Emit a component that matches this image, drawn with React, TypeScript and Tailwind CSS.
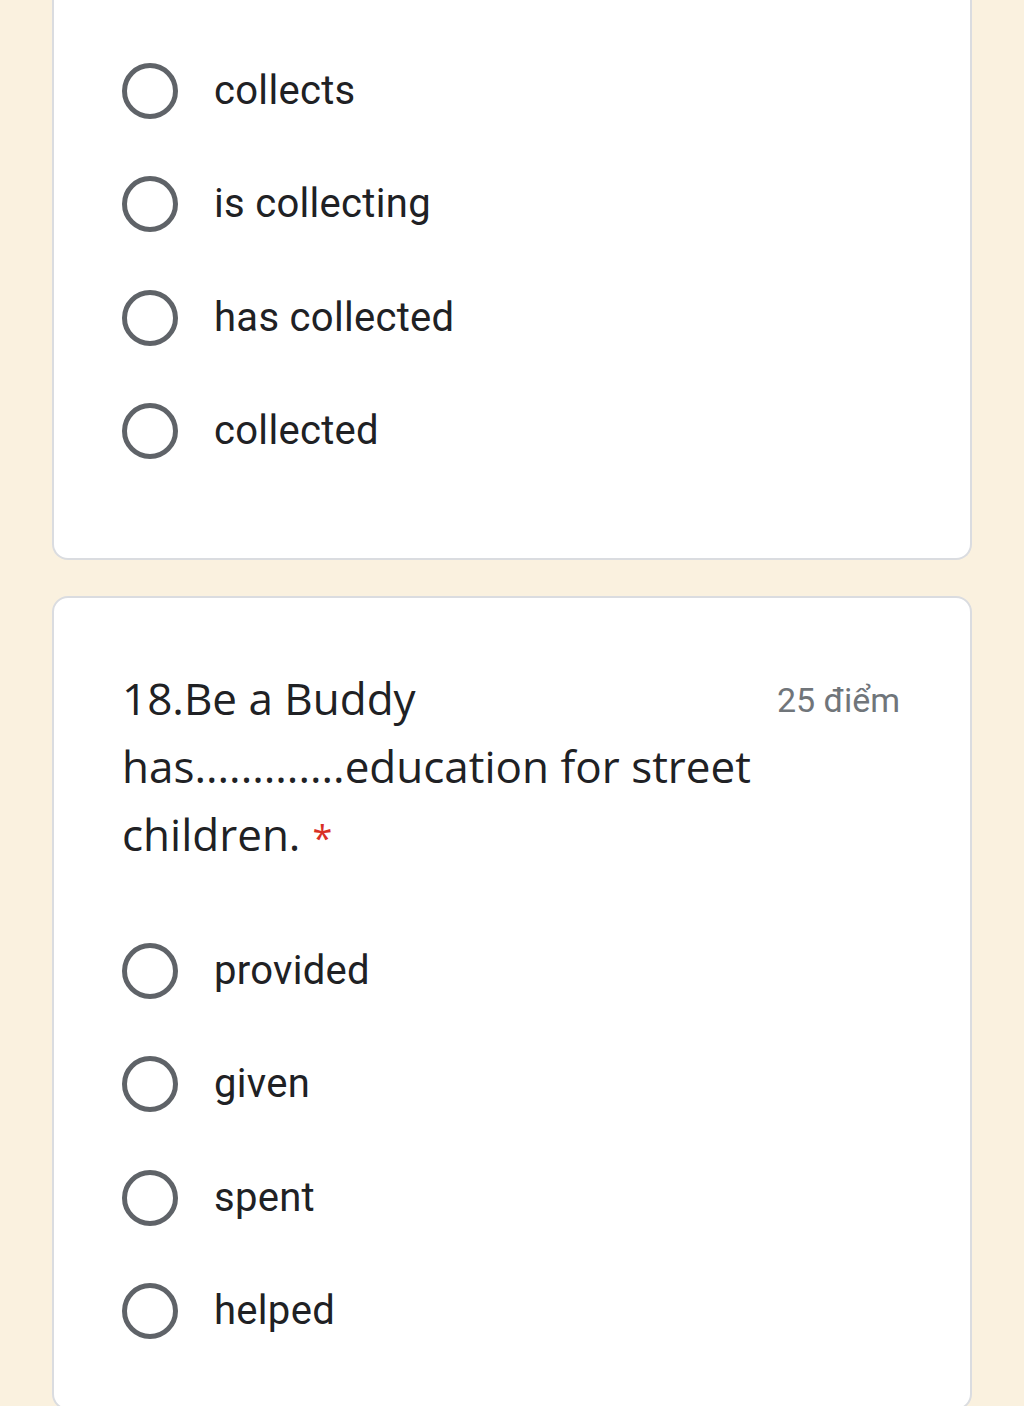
import React from "react";

const firstOptions = ["collects", "is collecting", "has collected", "collected"];
const secondOptions = ["provided", "given", "spent", "helped"];

export default function App() {
    return (
        <div className="min-h-[1406px] bg-[#faf1df] px-[52px] pb-10">
            <div className="bg-white border-2 border-t-0 border-[#dadce0] rounded-b-[16px] pt-[34px] pb-[70px] px-[68px]">
                <OptionList options={firstOptions} />
            </div>
            <div className="mt-[36px] bg-white border-2 border-[#dadce0] rounded-[16px] pt-[66px] pb-10 px-[68px]">
                <div className="flex items-start justify-between">
                    <h2 className="w-[650px] text-[44px] leading-[68px] text-[#202124] font-['Open_Sans',sans-serif]">
                        18.Be a Buddy has.............education for street children.
                        <span className="text-[#d93025] ml-[12px] text-[36px] leading-none">*</span>
                    </h2>
                    <span className="mt-[14px] mr-[2px] text-[34px] leading-[44px] text-[#70757a] font-['Roboto',sans-serif]">25 điểm</span>
                </div>
                <div className="mt-[46px]">
                    <OptionList options={secondOptions} />
                </div>
            </div>
        </div>
    );
}

function OptionList({ options }: { options: string[] }) {
    return (
        <div className="flex flex-col">
            {options.map(o => (
                <div key={o} className="flex items-center h-[113.5px]">
                    <span className="w-[56px] h-[56px] rounded-full border-[5px] border-[#5f6368] shrink-0" />
                    <span className="ml-[36px] text-[40px] tracking-[0.3px] text-[#202124] font-['Roboto',sans-serif]">{o}</span>
                </div>
            ))}
        </div>
    );
}
